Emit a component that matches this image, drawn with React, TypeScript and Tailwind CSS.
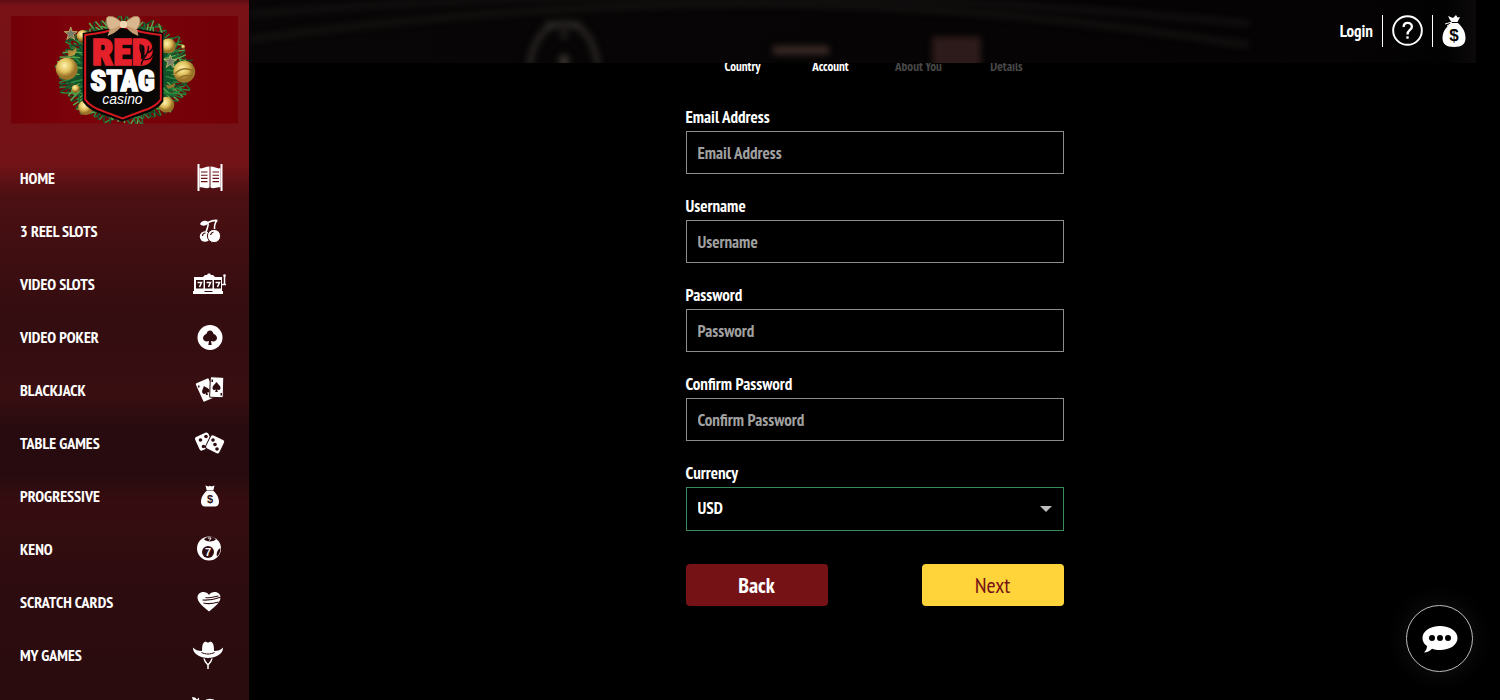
import type { ReactNode } from 'react';

type IconProps = { children: ReactNode };

function Glyph({ children }: IconProps) {
  return (
    <svg viewBox="0 0 36 36" className="h-9 w-9 shrink-0 fill-white" aria-hidden="true">
      {children}
    </svg>
  );
}

const DARK = '#2e0c0f';
const SPADE = 'M0-5.500C1.500-3 4.500-1.500 4.500 1C4.500 3.500 1.500 4 .7 2.500L1.500 5.500H-1.500L-.7 2.500C-1.500 4-4.500 3.500-4.500 1C-4.500-1.500-1.500-3 0-5.500Z';

function DoorsIcon() {
  return (
    <Glyph>
      <path d="M5.500 4h2v27h-2zM28.500 4h2v27h-2z" />
      <path d="M7.500 8c3 1.500 5-1.500 10-1.500v21c-4 2-6-1-10 0zM28.500 8c-3 1.500-5-1.500-10-1.500v21c4 2 6-1 10 0z" />
      <path d="M9 12h6.500M9 15.200h6.500M9 18.400h6.500M9 21.600h6.500M20.500 12H27M20.500 15.200H27M20.500 18.400H27M20.500 21.600H27" stroke="#681317" strokeWidth="1.100" />
    </Glyph>
  );
}

function CherryIcon() {
  return (
    <Glyph>
      <path d="M8 11c2-4 6-4 9-1.500-3 4-7 4-9 1.500Z" />
      <path d="M16 9.500c4-2 7-2.500 9.500-2M16 10c1 3-1 5-2 9M25 7.500c-3 3-3 7-2 12" fill="none" stroke="white" strokeWidth="1.600" />
      <circle cx="13" cy="23.500" r="5.200" />
      <circle cx="22" cy="23" r="6.600" stroke="#43100f" strokeWidth="1" />
      <path d="M10.500 23a3 3 0 0 1 3-3M18.500 22a4 4 0 0 1 3-3" fill="none" stroke="#43100f" strokeWidth="1.200" />
    </Glyph>
  );
}

function SlotsIcon() {
  return (
    <Glyph>
      <path d="M2 11h9l2-2h2l1-1.500h2L19 9h2l2 2h7v14h1v3H1v-3h1z" />
      <path d="M32.500 10v9M30 18.500h4" stroke="white" strokeWidth="1.500" />
      <circle cx="32.500" cy="9.500" r="1.300" />
      <path d="M4 14h7.500v8.500H4zM13 14h7.500v8.500H13zM22 14h7v8.500h-7z" fill={DARK} />
      <path d="M5.500 16.500h4l-2 4.500M14.500 16.500h4l-2 4.500M23.500 16.500h4l-2 4.500" fill="none" stroke="white" strokeWidth="1.500" />
      <path d="M12.500 25.500h8" stroke={DARK} strokeWidth="1" />
    </Glyph>
  );
}

function PokerIcon() {
  return (
    <Glyph>
      <circle cx="18" cy="18.500" r="12.500" />
      <path d="M18 11.500c1.800 0 3.200 1.500 3.400 3.300 2 .8 3.600 2.400 3.600 4.500 0 2.600-3.300 4-6 2.700l.7 4h-3.400l.7-4c-2.700 1.300-6-.1-6-2.700 0-2.100 1.600-3.700 3.600-4.500.2-1.800 1.600-3.300 3.400-3.300Z" fill={DARK} />
    </Glyph>
  );
}

function CardsIcon() {
  return (
    <Glyph>
      <rect x="7" y="8" width="14" height="20" rx="1" transform="rotate(-24 14 18)" />
      <rect x="18" y="5" width="13.500" height="20.500" rx="1" stroke={DARK} strokeWidth="1" transform="rotate(2 25 15)" />
      <path d={SPADE} transform="translate(13.500 18.500) rotate(-20) scale(.85)" fill={DARK} />
      <path d={SPADE} transform="translate(24.500 15) scale(.9)" fill={DARK} />
      <path d="M19.500 7.500h1.500v2.500h-1.500zM28.500 21h1.500v2.500h-1.500zM6 13.500h1.500v2H6z" fill={DARK} />
    </Glyph>
  );
}

function DiceIcon() {
  return (
    <Glyph>
      <rect x="4.500" y="9" width="14.500" height="15" rx="2.500" transform="rotate(-24 12 16)" />
      <rect x="15.500" y="11.500" width="15.500" height="15.500" rx="2.500" stroke={DARK} strokeWidth="1" transform="rotate(26 23 19)" />
      <g fill={DARK}>
        <circle cx="8.500" cy="15" r="1.800" />
        <circle cx="14" cy="11.500" r="1.800" />
        <circle cx="11.500" cy="21.500" r="1.800" />
        <circle cx="21" cy="15" r="1.800" />
        <circle cx="23" cy="19.500" r="1.800" />
        <circle cx="25" cy="24" r="1.800" />
      </g>
    </Glyph>
  );
}

function BagIcon() {
  return (
    <Glyph>
      <path d="M13.500 7.500l3 1 1.500-.8 1.500.8 3-1-1.200 5h-6.600zM14.500 13h7c3 2.500 5.500 6.500 5.500 11 0 3-2 4.500-4 4.500H13c-2 0-4-1.500-4-4.500 0-4.500 2.500-8.500 5.500-11Z" />
      <text x="18" y="25" textAnchor="middle" fontSize="11" fontWeight="700" fontFamily="Liberation Sans" fill={DARK}>$</text>
    </Glyph>
  );
}

function KenoIcon() {
  return (
    <Glyph>
      <circle cx="17" cy="17.500" r="12" />
      <path d="M12 8.500c2-3 9-4 12 0-3 2.500-9 2.500-12 0ZM28.500 17c0 4-1.500 7-3.500 8.500-1-3 .5-7 3.500-8.500Z" fill={DARK} />
      <path d="M16 7h3l-1.500 2.500" fill="none" stroke="white" strokeWidth="1" />
      <circle cx="16" cy="21" r="6" fill={DARK} />
      <text x="16" y="25" textAnchor="middle" fontSize="11" fontWeight="700" fontFamily="Liberation Sans">7</text>
    </Glyph>
  );
}

function ScratchIcon() {
  return (
    <Glyph>
      <path d="M17 27.500C11.500 23 5 18 5.500 13c.5-5 8-7 11.500-2 3.500-5 11-3 11.500 2C29 18 22.500 23 17 27.500Z" />
      <path d="M10.500 16c7 .5 12-.5 19-3M11.500 19c6 1.500 10 .5 15-1M13.500 13.500c5 1 9-1 13-1.500" fill="none" stroke={DARK} strokeWidth="1.100" />
    </Glyph>
  );
}

function HatIcon() {
  return (
    <Glyph>
      <path d="M10 14c0-5 .5-8 2.500-9 1.500-.8 2.500.5 3.500.5s2-1.300 3.500-.5c2 1 2.500 4 2.500 9 4 0 7-1 9-3.500.5 6-7 10.500-15 10.500S.5 16.500 1 10.500C3 13 6 14 10 14Z" />
      <path d="M9.500 15.500c4 2 9 2 13 0" fill="none" stroke={DARK} strokeWidth="1" />
      <path d="M12 21.500c.5 3 2 4.500 4 6.500 2-2 3.500-3.500 4-6.500M16 27v5" fill="none" stroke="white" strokeWidth="1.500" />
    </Glyph>
  );
}

function BootIcon() {
  return (
    <Glyph>
      <path d="M0 7l3 .5 2 2 2-2 .5 10H3zM14 9.500l4-.8 4 .8v6h-8z" />
    </Glyph>
  );
}

const menu = [
  { label: 'HOME', icon: <DoorsIcon /> },
  { label: '3 REEL SLOTS', icon: <CherryIcon /> },
  { label: 'VIDEO SLOTS', icon: <SlotsIcon /> },
  { label: 'VIDEO POKER', icon: <PokerIcon /> },
  { label: 'BLACKJACK', icon: <CardsIcon /> },
  { label: 'TABLE GAMES', icon: <DiceIcon /> },
  { label: 'PROGRESSIVE', icon: <BagIcon /> },
  { label: 'KENO', icon: <KenoIcon /> },
  { label: 'SCRATCH CARDS', icon: <ScratchIcon /> },
  { label: 'MY GAMES', icon: <HatIcon /> },
  { label: '', icon: <BootIcon /> },
];

const fields = [
  { id: 'email', label: 'Email Address', type: 'email' },
  { id: 'username', label: 'Username', type: 'text' },
  { id: 'password', label: 'Password', type: 'password' },
  { id: 'confirm', label: 'Confirm Password', type: 'password' },
];

const steps = [
  { label: 'Country', done: true },
  { label: 'Account', done: true },
  { label: 'About You', done: false },
  { label: 'Details', done: false },
];

// Needles of the wreath: short strokes fanned round the shield
const needles = Array.from({ length: 260 }, (_, i) => {
  const a = (i / 260) * Math.PI * 2;
  const wobble = (i * 37) % 11;
  const inner = 0.62 + ((i * 13) % 7) * 0.04;
  const outer = 0.84 + wobble * 0.019;
  const twist = a + (((i * 29) % 9) - 4) * 0.05;
  return {
    x1: 114 + Math.cos(a) * 68 * inner,
    y1: 55 + Math.sin(a) * 54 * inner,
    x2: 114 + Math.cos(twist) * 68 * outer,
    y2: 55 + Math.sin(twist) * 54 * outer,
    color: ['#1b6b35', '#2c8a3d', '#11502a', '#5aa64a'][(i * 7) % 4],
  };
});

function Logo() {
  return (
    <svg viewBox="0 0 228 108" className="block w-full" role="img" aria-label="Red Stag Casino">
      <defs>
        <radialGradient id="gold" cx="40%" cy="35%">
          <stop offset="0" stopColor="#fff3ae" />
          <stop offset=".6" stopColor="#dfbf5c" />
          <stop offset="1" stopColor="#9c7429" />
        </radialGradient>
        <linearGradient id="plate">
          <stop offset="0" stopColor="#720008" />
          <stop offset=".3" stopColor="#7c020a" />
          <stop offset="1" stopColor="#720007" />
        </linearGradient>
      </defs>
      <rect width="228" height="108" fill="url(#plate)" />
      <ellipse cx="114" cy="55" rx="54" ry="44" fill="#15522a" />
      {needles.map((n, i) => (
        <line key={i} x1={n.x1} y1={n.y1} x2={n.x2} y2={n.y2} stroke={n.color} strokeWidth="1.500" />
      ))}
      <g fill="url(#gold)">
        <circle cx="56" cy="53" r="11" />
        <circle cx="174" cy="56" r="11" />
        <circle cx="158" cy="30" r="7.500" />
        <circle cx="75" cy="92" r="7.500" />
        <circle cx="156" cy="89" r="8" />
        <circle cx="72" cy="20" r="6" />
        <circle cx="65" cy="73" r="4" />
        <circle cx="173" cy="31" r="2" />
        <path d="M57 34l5 1 3-3 1 3-2 4-6 2zM155 69l5 1 5-3-1 4-6 2z" />
      </g>
      <path d="M60 11l1.500 4.500 5 .2-4 3 1.500 5-4-3-4 3 1.500-5-4-3 5-.2zM160 39l1.500 4.500 5 .2-4 3 1.500 5-4-3-4 3 1.500-5-4-3 5-.2z" fill="#777b68" stroke="#c6b96e" strokeWidth=".8" />
      <path d="M165 58c4-5 12-7 19-2M167 64c6-5 11-5 15-3" fill="none" stroke="#927127" strokeWidth="1.500" />
      <path d="M72 17Q96 14 112 8q17 6 41 9v69q-6 9-21 13l-20 7-20-7Q78 95 72 86Z" fill="#050505" />
      <path d="M74.500 19Q97 16.500 112 10.500q16 6 38.500 8.500v65q-6 8-20 12L112 103l-18.500-7q-13-4-19-12Z" fill="#090606" stroke="#d71920" strokeWidth="2" />
      <g fontFamily="'Liberation Sans Narrow', 'Roboto Condensed', Roboto, sans-serif" fontWeight="900" textAnchor="middle">
        <text x="112" y="49" fontSize="38" fill="#e4202a" stroke="#e4202a" strokeWidth="1.600">RED</text>
        <text x="112" y="75" fontSize="29" fill="white" stroke="white" strokeWidth="1.400">STAG</text>
      </g>
      <path d="M131 49c0-7 8-9 7-19M135 41c-5-3-6-8-5-13M137 37c5-1 6-6 6-9M134 44c5 0 8-3 9-7" fill="none" stroke="#160607" strokeWidth="1.500" />
      <text x="112" y="88" textAnchor="middle" fontFamily="'Liberation Sans', sans-serif" fontStyle="italic" fontWeight="400" fontSize="14" fill="white">casino</text>
      <path d="M112 8c-5-7-14-10-16-6-1 4 1 11 4 12 4 0 9-2 12-6Zm2 0c5-7 13-10 15-6 2 4-1 11-4 12-4 0-8-2-11-6Z" fill="#d9b78f" stroke="#a77e57" strokeWidth="1" />
      <path d="M111 9c-2 5-8 9-14 11l2-6zM115 9c2 5 7 9 13 11l-1-6z" fill="#c69d72" />
      <rect x="109.500" y="5" width="7" height="7" rx="2" fill="#efd6b3" />
    </svg>
  );
}

function HeaderArt() {
  return (
    <svg viewBox="0 0 1227 64" preserveAspectRatio="none" className="absolute inset-0 h-full w-full" aria-hidden="true">
      <defs>
        <filter id="soft" filterUnits="userSpaceOnUse" x="-20" y="-40" width="1260" height="150" colorInterpolationFilters="sRGB">
          <feGaussianBlur stdDeviation="3" />
        </filter>
        <linearGradient id="edge">
          <stop offset="0" stopColor="#080606" />
          <stop offset=".9" stopColor="#050304" />
          <stop offset=".975" stopColor="#030202" />
          <stop offset="1" stopColor="#0b0909" />
        </linearGradient>
      </defs>
      <rect width="1227" height="64" fill="url(#edge)" />
      <g filter="url(#soft)" fill="none">
        <path d="M0 40Q260 4 500 4T1000 46" stroke="#151211" strokeWidth="6" />
        <path d="M0 14Q260 -6 500 -4T1000 24" stroke="#131010" strokeWidth="6" />
        <path d="M280 68Q287 24 315 24T349 68" stroke="#24211f" strokeWidth="7" />
        <path d="M296 25h36" stroke="#2c2927" strokeWidth="6" />
        <path d="M315 24V40" stroke="#1d1a19" strokeWidth="8" />
        <path d="M315 56V70" stroke="#35302c" strokeWidth="10" />
        <path d="M524 51h56" stroke="#382824" strokeWidth="9" />
        <path d="M683 37h49v40h-49z" fill="#2c1b1a" />
      </g>
    </svg>
  );
}

export default function App() {
  return (
    <div className="flex h-screen overflow-hidden bg-black font-['PT_Sans_Narrow','Liberation_Sans_Narrow','Open_Sans_Condensed','Roboto_Condensed','Noto_Sans',sans-serif] font-bold text-white">
      <aside className="w-[249px] shrink-0 overflow-hidden bg-[linear-gradient(#5c0d12_0px,#781217_6px,#741217_145px,#711317_165px,#4c1013_195px,#3e0e11_260px,#330d10_320px,#380e11_395px,#270b0e_430px,#280b0e_475px,#360d10_500px,#2c0c0f_600px,#2a0b0e_700px)]">
        <a href="#" className="mx-[11px] mt-4 block">
          <Logo />
        </a>
        <nav className="mt-7">
          {menu.map((item, i) => (
            <a key={i} href="#" className="flex h-[53px] items-center justify-between pr-[21px] pl-5 text-base">
              <span>{item.label}</span>
              {item.icon}
            </a>
          ))}
        </nav>
      </aside>

      <div className="flex min-w-0 flex-1 flex-col">
        <header className="relative z-10 mr-6 h-[63px] shrink-0">
          <HeaderArt />
          <div className="relative flex h-full items-center justify-end gap-[9px] pr-2.5 pb-0.5">
            <a href="#" className="text-[17px] leading-6">Login</a>
            <span className="h-8 w-px bg-white" />
            <button type="button" aria-label="Help">
              <svg viewBox="0 0 32 32" className="size-[31px]" fill="none" stroke="white" strokeWidth="2">
                <circle cx="16" cy="16" r="14.800" />
                <path d="M12 12.500c0-6 8.500-5.500 8.500-.5 0 3.500-4.500 3.500-4.500 8" strokeWidth="2.400" />
                <path d="M16 22v2.500" strokeWidth="2.400" />
              </svg>
            </button>
            <span className="h-8 w-px bg-white" />
            <button type="button" aria-label="Cashier">
              <svg viewBox="0 0 24 32" className="h-8 w-6" fill="white">
                <path d="M6 1l5 2 3-3 1.500 2.500L18 2l-2.500 5h-6L8 5z" />
                <path d="M3 9l7-2M5 11l5-3" stroke="white" strokeWidth="1" />
                <path d="M9 8h7c3 3 7.500 7 7.500 15 0 6-3.500 9-11.500 9S.5 29 .5 23C.5 15 6 11 9 8Z" />
                <text x="12" y="26" textAnchor="middle" fontSize="17" fontWeight="700" fontFamily="Liberation Sans" fill="black">$</text>
              </svg>
            </button>
          </div>
        </header>

        <main className="flex-1 px-6">
          <form className="mx-auto w-full max-w-[378px]" onSubmit={(e) => e.preventDefault()}>
            <ol className="-mt-1 mb-8 grid grid-cols-4 px-[13px] text-center text-[13px] leading-4">
              {steps.map((step) => (
                <li key={step.label} className={step.done ? 'text-white' : 'text-[#484848]'}>
                  {step.label}
                </li>
              ))}
            </ol>

            <div className="flex flex-col gap-[22px] text-[17px]">
              {fields.map((field) => (
                <div key={field.id} className="flex flex-col gap-1">
                  <label htmlFor={field.id} className="leading-5">{field.label}</label>
                  <input
                    id={field.id}
                    type={field.type}
                    placeholder={field.label}
                    className="h-[43px] w-full border border-[#8c8c8c] bg-black px-[11px] placeholder:text-[#a0a0a0] focus:outline-none"
                  />
                </div>
              ))}
              <div className="flex flex-col gap-1">
                <label htmlFor="currency" className="leading-5">Currency</label>
                <div className="relative">
                  <select id="currency" className="block h-11 w-full appearance-none border border-[#3a8a5c] bg-black px-[11px] focus:outline-none">
                    <option>USD</option>
                  </select>
                  <svg viewBox="0 0 12 6" className="pointer-events-none absolute top-[19px] right-3 h-1.5 w-3 fill-[#bdbdbd]" aria-hidden="true">
                    <path d="M0 0h12L6 6z" />
                  </svg>
                </div>
              </div>
            </div>

            <div className="mt-[33px] flex justify-between text-[22px] leading-8">
              <button type="button" className="h-[42px] w-[142px] rounded bg-[#751216]">Back</button>
              <button type="submit" className="h-[42px] w-[142px] rounded bg-[#ffd33a] font-normal text-[#751216]">Next</button>
            </div>
          </form>
        </main>
      </div>

      <button
        type="button"
        aria-label="Open chat"
        className="fixed right-[27px] bottom-7 flex size-[67px] items-center justify-center rounded-full border border-[#bcbcbc] bg-black shadow-[0_0_24px_rgba(255,255,255,0.08)]"
      >
        <svg viewBox="0 0 36 28" className="h-7 w-9" aria-hidden="true">
          <path d="M18 1c10 0 17.500 5 17.500 12S28 25 18 25c-3 0-6-.4-8-1.200C8 26 5 27.500 2 27.500c2-2 3-4 3-6.500C2 19 .5 16.500.5 13 .5 6 8 1 18 1Z" fill="white" />
          <circle cx="10" cy="13" r="3" />
          <circle cx="18" cy="13" r="3" />
          <circle cx="26" cy="13" r="3" />
        </svg>
      </button>
    </div>
  );
}
